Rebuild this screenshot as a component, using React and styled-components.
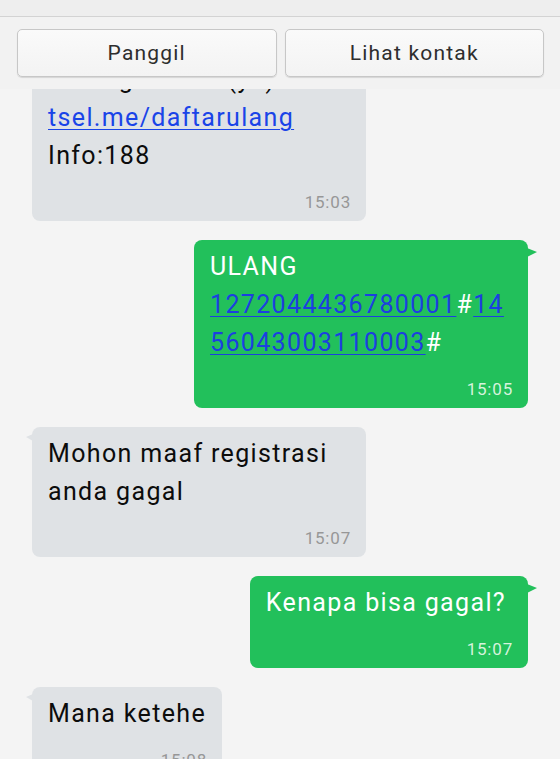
import React, { useLayoutEffect, useRef } from "react";
import styled, { createGlobalStyle, css } from "styled-components";

const GlobalStyle = createGlobalStyle`
  html, body {
    margin: 0;
    padding: 0;
    background: #f4f4f4;
  }
  body {
    font-family: Roboto, "Liberation Sans", Arial, sans-serif;
  }
  * {
    box-sizing: border-box;
  }
`;

const Screen = styled.div`
  display: flex;
  flex-direction: column;
  width: 560px;
  height: 759px;
  overflow: hidden;
  background: #f4f4f4;
`;

const StatusStrip = styled.div`
  height: 17px;
  background: #eeeeee;
  border-bottom: 1px solid #d3d3d3;
`;

const Toolbar = styled.div`
  display: flex;
  gap: 8px;
  padding: 12px 16px 12px 17px;
  background: #f2f2f2;
`;

const ActionButton = styled.button`
  flex: 1;
  height: 48px;
  border: 1px solid #c7c7c7;
  border-radius: 5px;
  background: linear-gradient(#fafafa, #f3f3f3);
  box-shadow: 0 1px 1px rgba(0, 0, 0, 0.12);
  font-family: Roboto, "Liberation Sans", sans-serif;
  font-size: 21px;
  letter-spacing: 1.2px;
  color: #2e2e2e;
  padding: 0;
`;

const Thread = styled.div`
  flex: 1;
  overflow: hidden;
  background: #f4f4f4;
`;

const ThreadInner = styled.div`
  display: flex;
  flex-direction: column;
  gap: 19px;
  padding: 16px 32px;
`;

const Row = styled.div`
  display: flex;
  justify-content: ${(p) => (p.$sent ? "flex-end" : "flex-start")};
`;

const Bubble = styled.div`
  position: relative;
  max-width: 334px;
  padding: 8px ${(p) => (p.$wide ? 22 : 16)}px 9px 16px;
  border-radius: 8px;
  font-size: 25px;
  letter-spacing: 1.35px;
  line-height: 38px;
  ${(p) =>
    p.$sent
      ? css`
          background: #22c05b;
          color: #ffffff;
          &::before {
            content: "";
            position: absolute;
            top: 8px;
            right: -9px;
            border-left: 10px solid #22c05b;
            border-top: 4px solid transparent;
            border-bottom: 5px solid transparent;
          }
        `
      : css`
          background: #dfe2e5;
          color: #0c0c0c;
          &::before {
            content: "";
            position: absolute;
            top: 7px;
            left: -6px;
            border-right: 7px solid #dfe2e5;
            border-top: 3px solid transparent;
            border-bottom: 4px solid transparent;
          }
        `}
`;

const Line = styled.div`
  word-break: ${(p) => (p.$breakAll ? "break-all" : "normal")};
`;

const Link = styled.span`
  color: ${(p) => (p.$onGreen ? "#1c3fe0" : "#1a44e8")};
  text-decoration: underline;
  text-decoration-thickness: 1px;
  text-underline-offset: 3px;
`;

const Time = styled.div`
  margin-top: 17px;
  text-align: right;
  font-size: 17px;
  line-height: 20px;
  letter-spacing: 0.8px;
  margin-right: ${(p) => (p.$wide ? -7 : -1)}px;
  color: ${(p) => (p.$sent ? "#d6f3dd" : "#979797")};
`;

const messages = [
  {
    sent: false,
    time: "15:03",
    body: (
      <>
        <Line>Registrasi ulang kartu Anda gratis di (ya):</Line>
        <Line>
          <Link>tsel.me/daftarulang</Link>
        </Line>
        <Line>Info:188</Line>
      </>
    ),
  },
  {
    sent: true,
    time: "15:05",
    body: (
      <>
        <Line>ULANG</Line>
        <Line $breakAll>
          <Link $onGreen>1272044436780001</Link>#<Link $onGreen>1456043003110003</Link>#
        </Line>
      </>
    ),
  },
  { sent: false, time: "15:07", body: "Mohon maaf registrasi anda gagal" },
  { sent: true, wide: true, time: "15:07", body: "Kenapa bisa gagal?" },
  { sent: false, time: "15:08", body: "Mana ketehe" },
];

const App = () => {
  const threadRef = useRef(null);

  useLayoutEffect(() => {
    // thread is scrolled a little, first bubble sits under the toolbar
    if (threadRef.current) threadRef.current.scrollTop = 90;
  }, []);

  return (
    <>
      <GlobalStyle />
      <Screen>
        <StatusStrip />
        <Toolbar>
          <ActionButton>Panggil</ActionButton>
          <ActionButton>Lihat kontak</ActionButton>
        </Toolbar>
        <Thread ref={threadRef}>
          <ThreadInner>
            {messages.map((m, i) => (
              <Row key={i} $sent={m.sent}>
                <Bubble $sent={m.sent} $wide={m.wide}>
                  {m.body}
                  <Time $sent={m.sent} $wide={m.wide}>{m.time}</Time>
                </Bubble>
              </Row>
            ))}
          </ThreadInner>
        </Thread>
      </Screen>
    </>
  );
};

export default App;
